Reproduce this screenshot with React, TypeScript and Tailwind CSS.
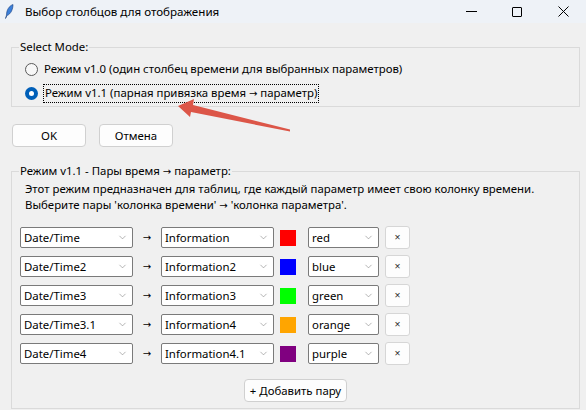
import { ChevronDown } from 'lucide-react';

const pairs = [
  { time: 'Date/Time', param: 'Information', color: 'red', swatch: 'bg-[#ff0000]' },
  { time: 'Date/Time2', param: 'Information2', color: 'blue', swatch: 'bg-[#0000ff]' },
  { time: 'Date/Time3', param: 'Information3', color: 'green', swatch: 'bg-[#00ff00]' },
  { time: 'Date/Time3.1', param: 'Information4', color: 'orange', swatch: 'bg-[#ffa500]' },
  { time: 'Date/Time4', param: 'Information4.1', color: 'purple', swatch: 'bg-[#800080]' },
];

const arrowFont = { fontFamily: '"DejaVu Sans", sans-serif' };

function Combo({ value, width }: { value: string; width: string }) {
  return (
    <div className={`${width} h-[21px] flex items-center justify-between bg-white border border-[#7a7a7a] rounded-[2px] pl-[3px] pr-[4px]`}>
      <span className="text-[11.4px] text-black leading-none">{value}</span>
      <ChevronDown className="w-[11px] h-[11px] text-[#777]" strokeWidth={1.2} />
    </div>
  );
}

function Radio({ checked }: { checked?: boolean }) {
  if (checked) {
    return (
      <div className="w-[13px] h-[13px] rounded-full bg-[#005fb8] flex items-center justify-center">
        <div className="w-[5px] h-[5px] rounded-full bg-white" />
      </div>
    );
  }
  return <div className="w-[13px] h-[13px] rounded-full border border-[#5a5a5a] bg-[#f7f7f7]" />;
}

export default function App() {
  return (
    <div className="relative w-[586px] h-[410px] overflow-hidden bg-[#f0f0f0] text-black text-[11.4px]" style={{ fontFamily: '"Noto Sans", sans-serif' }}>
      {/* Title bar */}
      <div className="h-[23px] bg-[#eef2f7] flex items-center">
        <svg className="ml-[5px] w-[9px] h-[15px]" viewBox="0 0 9 15">
          <path d="M8 0.5 C4 2 1.5 6 1.5 11 L0.5 14.5 L2 11.5 C6 10 8 5 8 0.5 Z" fill="#3b7fd9" stroke="#1a3f80" strokeWidth="0.6" />
        </svg>
        <span className="ml-[11px] text-[11.6px]">Выбор столбцов для отображения</span>
        <div className="ml-auto flex items-center h-full">
          <div className="w-[46px] flex justify-center"><div className="w-[11px] h-px bg-black" /></div>
          <div className="w-[46px] flex justify-center"><div className="w-[10px] h-[10px] border border-black rounded-[1px]" /></div>
          <div className="w-[46px] flex justify-center">
            <svg width="11" height="11" viewBox="0 0 11 11"><path d="M0.5 0.5 L10.5 10.5 M10.5 0.5 L0.5 10.5" stroke="black" strokeWidth="1" /></svg>
          </div>
        </div>
      </div>

      {/* Select mode group */}
      <fieldset className="mt-[16px] ml-[11px] w-[569px] h-[68px] border border-[#dadada] pt-[6px]">
        <legend className="ml-[7px] px-px leading-[16px]">Select Mode:</legend>
        <div className="pl-[13px] flex flex-col gap-[8px]">
          <div className="flex items-center gap-[6px] h-[16px]">
            <Radio />
            <span>Режим v1.0 (один столбец времени для выбранных параметров)</span>
          </div>
          <div className="flex items-center gap-[5px] h-[16px]">
            <Radio checked />
            <span className="border border-dotted border-black px-px leading-[16px]">
              Режим v1.1 (парная привязка время <span style={arrowFont} className="text-[10px]">→</span> параметр)
            </span>
          </div>
        </div>
      </fieldset>

      {/* OK / Cancel */}
      <div className="flex gap-[13px] ml-[12px] mt-[17px]">
        <button className="w-[74px] h-[23px] bg-[#fdfdfd] border border-[#d0d0d0] rounded-[4px]">OK</button>
        <button className="w-[74px] h-[23px] bg-[#fdfdfd] border border-[#d0d0d0] rounded-[4px]">Отмена</button>
      </div>

      {/* Pairs group */}
      <fieldset className="mt-[16px] ml-[11px] w-[569px] h-[246px] border border-[#dadada] pt-[1px]">
        <legend className="ml-[7px] px-px leading-[16px]">
          Режим v1.1 - Пары время <span style={arrowFont} className="text-[10px]">→</span> параметр:
        </legend>
        <div className="pl-[13px] leading-[16px]">
          <div>Этот режим предназначен для таблиц, где каждый параметр имеет свою колонку времени.</div>
          <div>
            Выберите пары 'колонка времени' <span style={arrowFont} className="text-[10px]">→</span> 'колонка параметра'.
          </div>
        </div>
        <div className="mt-[13px] pl-[8px] flex flex-col gap-[8px]">
          {pairs.map((p) => (
            <div key={p.time} className="flex items-center h-[21px]">
              <Combo value={p.time} width="w-[113px]" />
              <span style={arrowFont} className="w-[28px] text-center text-[10px]">→</span>
              <Combo value={p.param} width="w-[113px]" />
              <div className={`ml-[6px] w-[16px] h-[16px] ${p.swatch}`} />
              <div className="ml-[12px]"><Combo value={p.color} width="w-[71px]" /></div>
              <button className="ml-[6px] w-[25px] h-[23px] bg-[#fdfdfd] border border-[#d6d6d6] rounded-[3px] text-[10.5px] leading-none text-[#333] flex items-center justify-center">×</button>
            </div>
          ))}
        </div>
        <div className="mt-[15px] flex justify-center">
          <button className="h-[23px] px-[5px] bg-[#fdfdfd] border border-[#d0d0d0] rounded-[4px]">+ Добавить пару</button>
        </div>
      </fieldset>

      {/* Red annotation arrow */}
      <svg className="absolute left-0 top-0 pointer-events-none" width="586" height="410">
        <polygon points="178,106 194,99 193,105 290,129.5 290,131.5 191,112 190,117" fill="#dc5648" />
      </svg>
    </div>
  );
}
